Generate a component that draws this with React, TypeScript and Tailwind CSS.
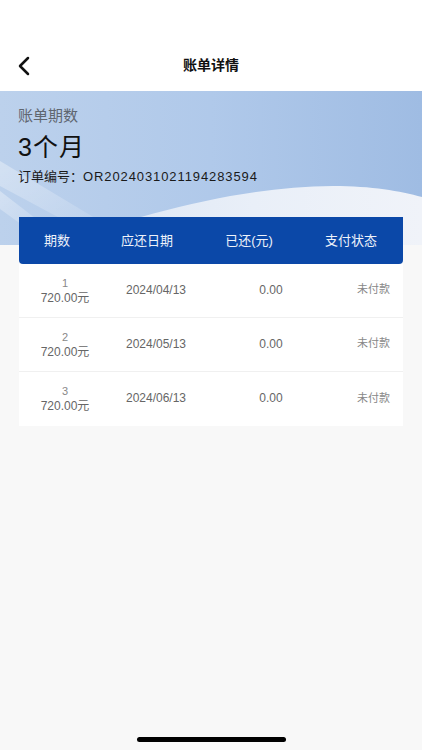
import React from "react";

const rows = [
  { n: "1", amt: "720.00元", date: "2024/04/13", paid: "0.00", status: "未付款" },
  { n: "2", amt: "720.00元", date: "2024/05/13", paid: "0.00", status: "未付款" },
  { n: "3", amt: "720.00元", date: "2024/06/13", paid: "0.00", status: "未付款" },
];

export default function App() {
  return (
    <div
      className="min-h-[750px] w-full bg-[#f8f8f8] flex flex-col"
      style={{ fontFamily: '"Liberation Sans", "Noto Sans CJK SC", sans-serif' }}
    >
      {/* Nav */}
      <div className="h-[91px] bg-white flex items-end">
        <div className="relative h-[50px] w-full flex items-center justify-center">
          <div className="absolute left-[16px] top-[15px]">
            <svg width="16" height="20" viewBox="0 0 16 20" fill="none">
              <path d="M12 2 L4 10 L12 18" stroke="#111" strokeWidth="2.5" strokeLinecap="round" strokeLinejoin="round" />
            </svg>
          </div>
          <span className="text-[14px] font-bold text-[#111] mt-[-1px]">账单详情</span>
        </div>
      </div>

      {/* Banner */}
      <div className="relative h-[154px] bg-gradient-to-r from-[#bcd1ec] via-[#b0c9ea] to-[#9fbce3] overflow-hidden">
        <svg className="absolute inset-0" width="422" height="154" viewBox="0 0 422 154" preserveAspectRatio="none">
          <defs>
            <linearGradient id="wv" x1="0" y1="0" x2="1" y2="0">
              <stop offset="0" stopColor="#d6e2f2" />
              <stop offset="0.6" stopColor="#e9eff8" />
              <stop offset="1" stopColor="#f0f3f9" />
            </linearGradient>
            <linearGradient id="st" x1="0" y1="0" x2="1" y2="1">
              <stop offset="0" stopColor="#ffffff" stopOpacity="0.35" />
              <stop offset="1" stopColor="#ffffff" stopOpacity="0" />
            </linearGradient>
          </defs>
          <path d="M0 70 L140 154 L110 154 L0 95 Z" fill="url(#st)" />
          <path d="M0 100 L70 154 L50 154 L0 118 Z" fill="url(#st)" />
          <path d="M0 175 C100 135 220 96 333 95 C372 95 400 100 422 106 L422 154 L0 154 Z" fill="url(#wv)" />
        </svg>
        <div className="relative px-[18px] pt-[15px]">
          <div className="text-[15px] leading-[20px] text-[#5f6670]">账单期数</div>
          <div className="mt-[5px] text-[25px] leading-[32px] text-[#111] tracking-[1px]">3个月</div>
          <div className="mt-[5px] text-[13px] leading-[18px] text-[#1a1a1a]">
            订单编号：<span className="tracking-[0.9px]">OR2024031021194283594</span>
          </div>
        </div>
      </div>

      {/* Table */}
      <div className="relative mt-[-28px] mx-[19px]">
        <div className="h-[47px] bg-[#0b48a8] rounded-b-[4px] flex items-center text-[13px] text-[#eef2fa]">
          <div className="w-[76px] text-center">期数</div>
          <div className="w-[104px] text-center">应还日期</div>
          <div className="w-[100px] text-center">已还(元)</div>
          <div className="w-[104px] text-center">支付状态</div>
        </div>
        <div className="bg-white">
          {rows.map((r, i) => (
            <div
              key={r.n}
              className={`flex items-center h-[54px] ${i < rows.length - 1 ? "border-b border-[#f0f0f0]" : ""}`}
            >
              <div className="w-[92px] flex flex-col items-center leading-[15px]">
                <span className="text-[11px] text-[#888]">{r.n}</span>
                <span className="text-[12px] text-[#666]">{r.amt}</span>
              </div>
              <div className="w-[90px] text-center text-[12px] text-[#666] mt-[-2px]">{r.date}</div>
              <div className="w-[140px] text-center text-[12px] text-[#666] mt-[-2px]">{r.paid}</div>
              <div className="flex-1 text-right pr-[13px] text-[11px] text-[#888] mt-[-2px]">{r.status}</div>
            </div>
          ))}
        </div>
      </div>

      <div className="flex-1" />
      <div className="flex justify-center pb-[8px]">
        <div className="w-[149px] h-[5px] rounded-full bg-black" />
      </div>
    </div>
  );
}
